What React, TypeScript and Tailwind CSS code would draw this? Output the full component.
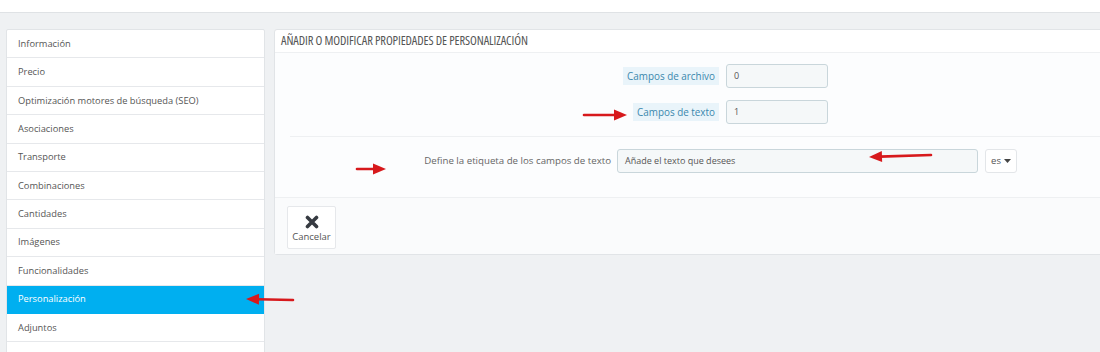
import React from "react";

const items = [
  "Información",
  "Precio",
  "Optimización motores de búsqueda (SEO)",
  "Asociaciones",
  "Transporte",
  "Combinaciones",
  "Cantidades",
  "Imágenes",
  "Funcionalidades",
  "Personalización",
  "Adjuntos",
  "",
];

function Arrow({ x1, y1, x2, y2 }: { x1: number; y1: number; x2: number; y2: number }) {
  const dx = x2 - x1;
  const dy = y2 - y1;
  const len = Math.sqrt(dx * dx + dy * dy);
  const ux = dx / len;
  const uy = dy / len;
  const hl = 13;
  const hw = 5.5;
  const bx = x2 - ux * hl;
  const by = y2 - uy * hl;
  const p1 = `${bx - uy * hw},${by + ux * hw}`;
  const p2 = `${bx + uy * hw},${by - ux * hw}`;
  return (
    <g>
      <line x1={x1} y1={y1} x2={bx + ux * 2} y2={by + uy * 2} stroke="#d7191c" strokeWidth={2.6} strokeLinecap="round" />
      <polygon points={`${x2},${y2} ${p1} ${p2}`} fill="#d7191c" />
    </g>
  );
}

export default function App() {
  return (
    <div
      className="relative w-[1100px] h-[352px] overflow-hidden bg-[#eff1f3]"
      style={{ fontFamily: '"Open Sans", "Noto Sans", sans-serif' }}
    >
      <div className="h-[13px] bg-white border-b border-[#dfe2e5]" />
      <div className="flex items-start pt-[16px] pl-[6px] gap-[9px]">
        {/* Sidebar */}
        <div className="w-[259px] shrink-0 bg-white border border-[#e1e4e7] rounded-[2px]">
          {items.map((it, i) => {
            const active = it === "Personalización";
            return (
              <div
                key={i}
                className={
                  "h-[28.4px] flex items-center pl-[11px] text-[9.3px] border-b " +
                  (active
                    ? "bg-[#00aff0] text-white border-[#00aff0]"
                    : "text-[#555] border-[#e6e8eb]")
                }
              >
                {it}
              </div>
            );
          })}
        </div>

        {/* Panel */}
        <div className="w-[840px] shrink-0 bg-white border border-[#e1e4e7] rounded-[3px]">
          <div className="h-[23px] flex items-center pl-[6px] border-b border-[#eef0f2] text-[12.5px] text-[#555] uppercase font-stretch-condensed tracking-[-0.1px]">
            Añadir o modificar propiedades de personalización
          </div>
          <div className="bg-[#fcfdfe] pt-[11px]">
            <div className="flex items-center h-[24px]">
              <div className="w-[445px] flex justify-end pr-[1px]">
                <span className="px-[4px] py-[2px] bg-[#e9f4fa] text-[#3a87ad] text-[9.9px]">Campos de archivo</span>
              </div>
              <div className="ml-[6px] w-[102px] h-[24px] bg-[#f5f8f9] border border-[#c9d6db] rounded-[3px] flex items-center pl-[7px] text-[9px] text-[#555]">
                0
              </div>
            </div>
            <div className="flex items-center h-[24px] mt-[12px]">
              <div className="w-[445px] flex justify-end pr-[1px]">
                <span className="px-[4px] py-[2px] bg-[#e9f4fa] text-[#3a87ad] text-[9.9px]">Campos de texto</span>
              </div>
              <div className="ml-[6px] w-[102px] h-[24px] bg-[#f5f8f9] border border-[#c9d6db] rounded-[3px] flex items-center pl-[7px] text-[9px] text-[#555]">
                1
              </div>
            </div>
            <div className="ml-[15px] mt-[12px] border-t border-[#eef0f2]" />
            <div className="flex items-center h-[24px] mt-[12px]">
              <div className="w-[336px] flex justify-end">
                <span className="text-[9.7px] text-[#666]">Define la etiqueta de los campos de texto</span>
              </div>
              <div className="ml-[6px] w-[361px] h-[24px] bg-[#f5f8f9] border border-[#c9d6db] rounded-[3px] flex items-center pl-[7px] text-[9px] text-[#555]">
                Añade el texto que desees
              </div>
              <div className="ml-[7px] w-[32px] h-[24px] bg-white border border-[#e3e6e9] rounded-[3px] flex items-center justify-center gap-[3px] text-[9.5px] text-[#555]">
                es
                <svg width="7" height="4" viewBox="0 0 7 4"><polygon points="0,0 7,0 3.5,4" fill="#444" /></svg>
              </div>
            </div>
            <div className="h-[24px]" />
          </div>
          <div className="bg-[#fafbfc] border-t border-[#eef0f2] h-[57px] pl-[12px] pt-[8px]">
            <div className="w-[49px] h-[43px] bg-white border border-[#e6e8eb] rounded-[2px] flex flex-col items-center justify-center">
              <svg width="14" height="14" viewBox="0 0 14 14" className="mt-[1px]">
                <path d="M2.5 2.5 L11.5 11.5 M11.5 2.5 L2.5 11.5" stroke="#363a41" strokeWidth={3.6} strokeLinecap="round" />
              </svg>
              <span className="text-[9.5px] text-[#555] mt-[3px] leading-none">Cancelar</span>
            </div>
          </div>
        </div>
      </div>

      <svg className="absolute inset-0 pointer-events-none" width="1100" height="352">
        <Arrow x1={584} y1={115} x2={627} y2={115} />
        <Arrow x1={357} y1={169} x2={386} y2={169} />
        <Arrow x1={931} y1={155} x2={869} y2={157} />
        <Arrow x1={293} y1={300} x2={246} y2={299} />
      </svg>
    </div>
  );
}
